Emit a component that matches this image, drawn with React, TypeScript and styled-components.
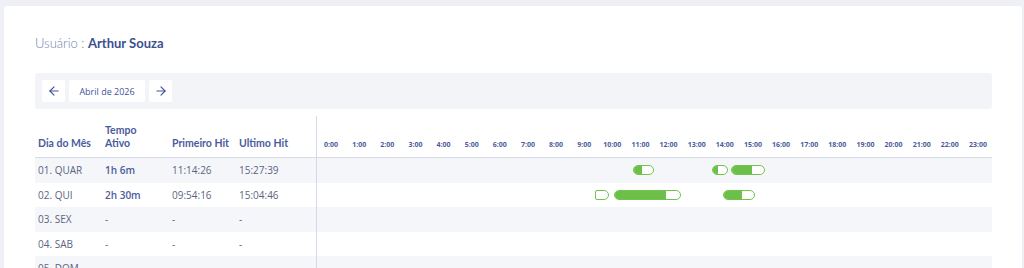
import React from 'react'
import styled, { createGlobalStyle } from 'styled-components'
import { ArrowLeft, ArrowRight } from 'lucide-react'

interface Session {
    start: number
    end: number
    fill: number
}

interface Day {
    label: string
    active: string
    first: string
    last: string
    sessions: Session[]
}

const GlobalStyle = createGlobalStyle`
    body {
        margin: 0;
        background: #eef0f5;
        font-family: "Open Sans", "Liberation Sans", sans-serif;
    }
`

const Page = styled.div`
    padding: 6px 2px 0 4px;
    height: 262px;
    overflow: hidden;
`

const Card = styled.div`
    background: #fff;
    border-radius: 3px 3px 0 0;
    padding: 30px 30px 0 31px;
    min-height: 300px;
`

const Title = styled.h2`
    margin: 0 0 22px;
    font-family: Lato, "Open Sans", sans-serif;
    font-size: 13px;
    line-height: 15px;
    font-weight: 300;
    color: #6f7fb0;
    b {
        font-weight: 700;
        color: #3d4f8f;
    }
`

const Toolbar = styled.div`
    display: flex;
    gap: 4px;
    height: 36px;
    padding: 7px;
    box-sizing: border-box;
    background: #f3f4f8;
    border-radius: 3px;
`

const NavButton = styled.button<{ wide?: boolean }>`
    display: flex;
    align-items: center;
    justify-content: center;
    width: ${props => props.wide ? '76px' : '23px'};
    height: 22px;
    padding: 0;
    border: none;
    border-radius: 2px;
    background: #fff;
    color: #42539a;
    font-family: inherit;
    font-size: 9px;
    cursor: pointer;
`

const Table = styled.div`
    margin-top: 7px;
    display: grid;
    grid-template-columns: 67px 67px 67px 80px 1fr;
`

const HeadCell = styled.div`
    height: 42px;
    box-sizing: border-box;
    padding: 0 3px 7px;
    display: flex;
    align-items: flex-end;
    border-bottom: 1px solid #d6dbe9;
    font-family: Lato, "Open Sans", sans-serif;
    font-size: 10.5px;
    line-height: 13px;
    font-weight: 700;
    color: #4b5c9c;
    white-space: nowrap;
`

const Hours = styled.div`
    height: 42px;
    box-sizing: border-box;
    border-left: 1px solid #d3d9e8;
    border-bottom: 1px solid #d6dbe9;
    display: grid;
    grid-template-columns: repeat(24, 1fr);
    align-items: end;
    padding-bottom: 8px;
`

const HourLabel = styled.span`
    text-align: center;
    font-size: 7px;
    font-weight: 700;
    color: #4b5c9c;
`

const Cell = styled.div<{ shaded: boolean; strong?: boolean }>`
    height: 24.5px;
    padding: 0 3px;
    display: flex;
    align-items: center;
    background: ${props => props.shaded ? '#f5f6f9' : '#fff'};
    font-size: 10px;
    font-weight: ${props => props.strong ? 600 : 400};
    color: ${props => props.strong ? '#4b5c9c' : '#5b6481'};
    white-space: nowrap;
`

const Track = styled.div<{ shaded: boolean }>`
    position: relative;
    height: 24.5px;
    border-left: 1px solid #d3d9e8;
    background: ${props => props.shaded ? '#f5f6f9' : '#fff'};
`

const Bar = styled.div<{ empty: boolean }>`
    position: absolute;
    top: 7px;
    height: 10px;
    box-sizing: border-box;
    border: 1px solid #72c34c;
    border-radius: ${props => props.empty ? '2px 5px 5px 2px' : '5px'};
    background: #fff;
    overflow: hidden;
`

const BarFill = styled.div`
    height: 100%;
    background: #6cc04a;
`

const days: Day[] = [
    {
        label: '01. QUAR', active: '1h 6m', first: '11:14:26', last: '15:27:39',
        sessions: [
            { start: 11.24, end: 11.98, fill: 0.44 },
            { start: 14.04, end: 14.61, fill: 0.37 },
            { start: 14.72, end: 15.93, fill: 0.62 },
        ],
    },
    {
        label: '02. QUI', active: '2h 30m', first: '09:54:16', last: '15:04:46',
        sessions: [
            { start: 9.88, end: 10.38, fill: 0 },
            { start: 10.56, end: 12.94, fill: 0.79 },
            { start: 14.44, end: 15.57, fill: 0.6 },
        ],
    },
    { label: '03. SEX', active: '-', first: '-', last: '-', sessions: [] },
    { label: '04. SAB', active: '-', first: '-', last: '-', sessions: [] },
    { label: '05. DOM', active: '-', first: '-', last: '-', sessions: [] },
]

const hours = Array.from({ length: 24 }, (_, i) => `${i}:00`)

const App: React.FC = () => {
    return (
        <Page>
            <GlobalStyle />
            <Card>
                <Title>Usuário : <b>Arthur Souza</b></Title>
                <Toolbar>
                    <NavButton><ArrowLeft size={14} strokeWidth={2} /></NavButton>
                    <NavButton wide>Abril de 2026</NavButton>
                    <NavButton><ArrowRight size={14} strokeWidth={2} /></NavButton>
                </Toolbar>
                <Table>
                    <HeadCell>Dia do Mês</HeadCell>
                    <HeadCell>Tempo<br />Ativo</HeadCell>
                    <HeadCell>Primeiro Hit</HeadCell>
                    <HeadCell>Ultimo Hit</HeadCell>
                    <Hours>
                        {hours.map(h => <HourLabel key={h}>{h}</HourLabel>)}
                    </Hours>
                    {days.map((day, i) => {
                        const shaded = i % 2 === 0
                        return (
                            <React.Fragment key={day.label}>
                                <Cell shaded={shaded}>{day.label}</Cell>
                                <Cell shaded={shaded} strong={day.active !== '-'}>{day.active}</Cell>
                                <Cell shaded={shaded}>{day.first}</Cell>
                                <Cell shaded={shaded}>{day.last}</Cell>
                                <Track shaded={shaded}>
                                    {day.sessions.map(s => (
                                        <Bar
                                            key={s.start}
                                            empty={s.fill === 0}
                                            style={{
                                                left: `${(s.start / 24) * 100}%`,
                                                width: `${((s.end - s.start) / 24) * 100}%`,
                                            }}
                                        >
                                            <BarFill style={{ width: `${s.fill * 100}%` }} />
                                        </Bar>
                                    ))}
                                </Track>
                            </React.Fragment>
                        )
                    })}
                </Table>
            </Card>
        </Page>
    )
}

export default App
